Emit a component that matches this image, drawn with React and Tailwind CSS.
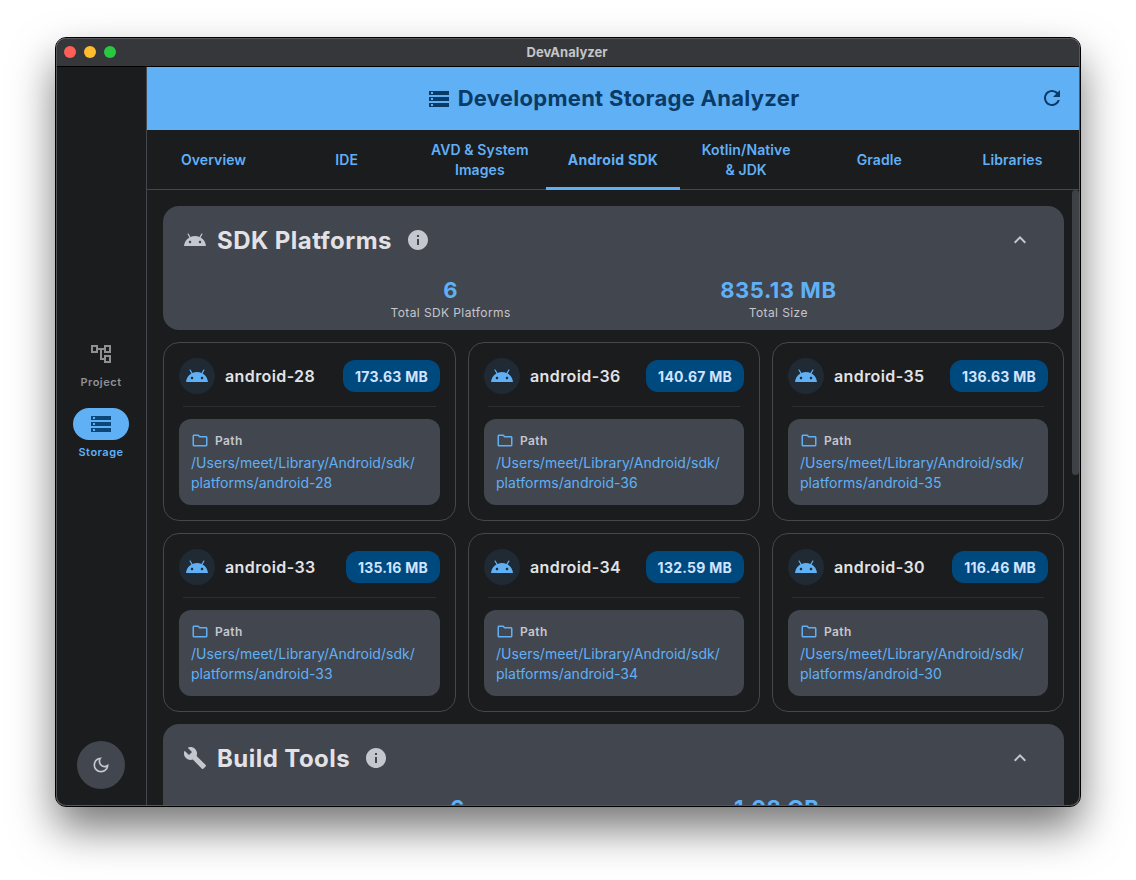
import React from 'react'

const icons = {
  android: 'M17.6 9.48l1.84-3.18c.16-.31.04-.69-.26-.85-.29-.15-.65-.06-.83.22l-1.88 3.24c-2.86-1.21-6.08-1.21-8.94 0L5.65 5.67c-.19-.29-.58-.38-.87-.2-.28.18-.37.54-.22.83L6.4 9.48C3.3 11.25 1.28 14.44 1 18h22c-.28-3.56-2.3-6.75-5.4-8.52zM7 15.25c-.69 0-1.25-.56-1.25-1.25s.56-1.25 1.25-1.25 1.25.56 1.25 1.25-.56 1.25-1.25 1.25zm10 0c-.69 0-1.25-.56-1.25-1.25s.56-1.25 1.25-1.25 1.25.56 1.25 1.25-.56 1.25-1.25 1.25z',
  storage: 'M2 20h20v-4H2v4zm2-3h2v2H4v-2zM2 4v4h20V4H2zm4 3H4V5h2v2zm-4 7h20v-4H2v4zm2-3h2v2H4v-2z',
  refresh: 'M17.65 6.35C16.2 4.9 14.21 4 12 4c-4.42 0-7.99 3.58-7.99 8s3.57 8 7.99 8c3.73 0 6.84-2.55 7.73-6h-2.08c-.82 2.33-3.04 4-5.65 4-3.31 0-6-2.69-6-6s2.69-6 6-6c1.66 0 3.14.69 4.22 1.78L13 11h7V4l-2.35 2.35z',
  info: 'M12 2C6.48 2 2 6.48 2 12s4.48 10 10 10 10-4.48 10-10S17.52 2 12 2zm1 15h-2v-6h2v6zm0-8h-2V7h2v2z',
  build: 'M22.7 19l-9.1-9.1c.9-2.3.4-5-1.5-6.9-2-2-5-2.4-7.4-1.3L9 6 6 9 1.6 4.7C.4 7.1.9 10.1 2.9 12.1c1.9 1.9 4.6 2.4 6.9 1.5l9.1 9.1c.4.4 1 .4 1.4 0l2.3-2.3c.5-.4.5-1.1.1-1.4z',
  less: 'M12 8l-6 6 1.41 1.41L12 10.83l4.59 4.58L18 14z',
  folder: 'M9.17 6l2 2H20v10H4V6h5.17M10 4H4c-1.1 0-1.99.9-1.99 2L2 18c0 1.1.9 2 2 2h16c1.1 0 2-.9 2-2V8c0-1.1-.9-2-2-2h-8l-2-2z',
  moon: 'M9.37 5.51c-.18.64-.27 1.31-.27 1.99 0 4.08 3.32 7.4 7.4 7.4.68 0 1.35-.09 1.99-.27C17.45 17.19 14.93 19 12 19c-3.86 0-7-3.14-7-7 0-2.93 1.81-5.45 4.37-6.49zM12 3c-4.97 0-9 4.03-9 9s4.03 9 9 9 9-4.03 9-9c0-.46-.04-.92-.1-1.36-.98 1.37-2.58 2.26-4.4 2.26-2.98 0-5.4-2.42-5.4-5.4 0-1.81.89-3.42 2.26-4.4-.44-.06-.9-.1-1.36-.1z',
  tree: 'M22 11V3h-7v3H9V3H2v8h7V8h2v10h4v3h7v-8h-7v3h-2V8h2v3h7zM7 9H4V5h3v4zm10 6h3v4h-3v-4zm0-10h3v4h-3V5z',
}

function Icon({ name, className }) {
  return (
    <svg viewBox="0 0 24 24" fill="currentColor" className={className}>
      <path d={icons[name]} />
    </svg>
  )
}

const tabs = [
  { lines: ['Overview'] },
  { lines: ['IDE'] },
  { lines: ['AVD & System', 'Images'] },
  { lines: ['Android SDK'], active: true },
  { lines: ['Kotlin/Native', '& JDK'] },
  { lines: ['Gradle'] },
  { lines: ['Libraries'] },
]

const platforms = [
  { name: 'android-28', size: '173.63 MB' },
  { name: 'android-36', size: '140.67 MB' },
  { name: 'android-35', size: '136.63 MB' },
  { name: 'android-33', size: '135.16 MB' },
  { name: 'android-34', size: '132.59 MB' },
  { name: 'android-30', size: '116.46 MB' },
]

function RailItem({ icon, label, active }) {
  return (
    <div className="flex flex-col items-center gap-[4px]">
      <div className={`w-14 h-8 rounded-full flex items-center justify-center ${active ? 'bg-[#60b0f6] text-[#0a4778]' : 'text-[#8e9094]'}`}>
        <Icon name={icon} className="w-6 h-6" />
      </div>
      <span className={`text-[11px] leading-4 font-semibold tracking-[0.5px] ${active ? 'text-[#60b0f6]' : 'text-[#8e9094]'}`}>{label}</span>
    </div>
  )
}

function SectionHeader({ icon, title, stats }) {
  return (
    <div className="bg-[#42464e] rounded-2xl px-[18px] h-[124px]">
      <div className="flex items-center h-[68px] pl-[2px] pr-[14px]">
        <Icon name={icon} className="text-[#c5c7ce] w-6 h-6" />
        <span className="ml-[10px] text-[24px] leading-8 font-bold tracking-[0.45px] text-[#e2e2e6] translate-y-[1px]">{title}</span>
        <Icon name="info" className="w-6 h-6 ml-[14px] text-[#c5c7ce]" />
        <Icon name="less" className="w-6 h-6 ml-auto text-[#c5c7ce]" />
      </div>
      <div className="flex justify-evenly pt-[2px]">
        {stats.map(s => (
          <div key={s.label} className="flex flex-col items-center">
            <span className="text-[22px] leading-7 font-bold tracking-[0.55px] text-[#60b0f6]">{s.value}</span>
            <span className="mt-[1px] text-[12px] leading-4 tracking-[0.4px] text-[#c5c7ce]">{s.label}</span>
          </div>
        ))}
      </div>
    </div>
  )
}

function PlatformCard({ name, size }) {
  return (
    <div className="border border-[#44474d] rounded-2xl p-[15px] h-[179px]">
      <div className="flex items-center h-9">
        <div className="w-9 h-9 rounded-full bg-[#1f2a34] flex items-center justify-center shrink-0">
          <Icon name="android" className="w-6 h-6 text-[#60b0f6]" />
        </div>
        <span className="ml-[10px] text-[16px] font-semibold tracking-[0.4px] text-[#e2e2e6]">{name}</span>
        <span className="ml-auto h-8 px-[12px] rounded-xl bg-[#00497f] text-[#d1e4ff] text-[14px] font-bold tracking-[0.25px] flex items-center">{size}</span>
      </div>
      <div className="mx-1 mt-3 mb-3 border-t border-[#2c2e32]" />
      <div className="bg-[#42464e] rounded-xl h-[86px] px-3 pt-[11px]">
        <div className="flex items-center gap-[6px] h-5 translate-y-[0.5px]">
          <Icon name="folder" className="w-[18px] h-[18px] text-[#60b0f6]" />
          <span className="text-[12px] font-semibold tracking-[0.4px] text-[#c5c7ce]">Path</span>
        </div>
        <div className="mt-[3px] text-[14px] leading-5 tracking-[0.03px] text-[#60b0f6]">
          /Users/meet/Library/Android/sdk/<br />platforms/{name}
        </div>
      </div>
    </div>
  )
}

export default function App() {
  return (
    <div className="h-[880px] bg-white pl-[56px] pt-[38px] overflow-hidden font-['Inter',sans-serif]">
      <div className="w-[1024px] h-[768px] rounded-[10px] overflow-hidden flex flex-col bg-[#1b1c1e] border border-[#55575b] outline outline-1 outline-black shadow-[0_22px_44px_rgba(0,0,0,0.55)]">
        {/* title bar */}
        <div className="relative h-[28px] bg-[#36373b] border-b border-black flex items-center justify-center shrink-0">
          <div className="absolute left-[7px] top-[7px] flex gap-2">
            <span className="w-3 h-3 rounded-full bg-[#ff5f57]" />
            <span className="w-3 h-3 rounded-full bg-[#febc2e]" />
            <span className="w-3 h-3 rounded-full bg-[#28c840]" />
          </div>
          <span className="text-[13px] font-bold -translate-x-[1px] text-[#c4c5c7]">DevAnalyzer</span>
        </div>

        <div className="flex flex-1 min-h-0">
          {/* rail */}
          <div className="w-[90px] pr-[1px] border-r border-[#44474d] flex flex-col items-center shrink-0">
            <div className="flex-1 flex flex-col justify-center gap-[18px] pb-[10px]">
              <RailItem icon="tree" label="Project" />
              <RailItem icon="storage" label="Storage" active />
            </div>
            <button className="w-12 h-12 mb-4 rounded-full bg-[#42464e] text-[#c5c7ce] flex items-center justify-center">
              <Icon name="moon" className="w-5 h-5" />
            </button>
          </div>

          <div className="flex-1 min-w-0 flex flex-col">
            {/* header */}
            <div className="relative h-[63px] bg-[#60b0f6] flex items-center justify-center shrink-0">
              <Icon name="storage" className="w-6 h-6 text-[#0a3a66]" />
              <span className="ml-[7px] text-[22px] font-bold tracking-[0.28px] text-[#0a3a66]">Development Storage Analyzer</span>
              <Icon name="refresh" className="absolute right-[15px] -translate-y-[1px] w-6 h-6 text-[#0a3a66]" />
            </div>

            {/* tabs */}
            <div className="grid grid-cols-7 h-[60px] border-b border-[#44474d] shrink-0">
              {tabs.map(t => (
                <div key={t.lines[0]} className={`relative flex flex-col items-center justify-center text-[14px] leading-5 text-[#60b0f6] ${t.active ? 'font-bold tracking-[0.3px]' : 'font-semibold tracking-[0.1px]'}`}>
                  {t.lines.map(l => <span key={l}>{l}</span>)}
                  {t.active && <span className="absolute left-0 right-0 -bottom-px h-[3px] bg-[#60b0f6]" />}
                </div>
              ))}
            </div>

            {/* content */}
            <div className="relative flex-1 min-h-0 overflow-hidden pl-4 pr-[15px] pt-4">
              <div className="absolute right-0 top-0 w-[7px] h-[285px] rounded-full bg-[#3e4145]" />
              <div className="flex flex-col gap-3">
                <SectionHeader
                  icon="android"
                  title="SDK Platforms"
                  stats={[{ value: '6', label: 'Total SDK Platforms' }, { value: '835.13 MB', label: 'Total Size' }]}
                />
                <div className="grid grid-cols-[293px_292px_292px] gap-3">
                  {platforms.map(p => <PlatformCard key={p.name} {...p} />)}
                </div>
                <SectionHeader
                  icon="build"
                  title="Build Tools"
                  stats={[{ value: '6', label: 'Total Build Tools' }, { value: '1.08 GB', label: 'Total Size' }]}
                />
              </div>
            </div>
          </div>
        </div>
      </div>
    </div>
  )
}
